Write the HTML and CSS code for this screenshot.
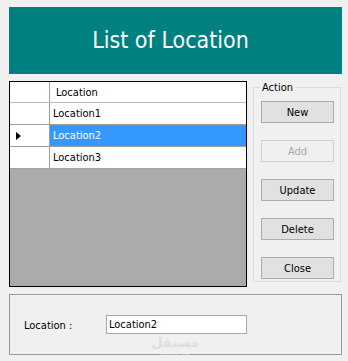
FILE: index.html
```html
<!DOCTYPE html>
<html lang="en">
<head>
  <meta charset="UTF-8">
  <title>List of Location</title>
  <link rel="stylesheet" href="styles.css">
</head>
<body>

  <div class="form">
    <div class="title">List of Location</div>

    <div class="main">
      <div class="grid">
        <table>
          <tr class="head">
            <td class="rowhead"></td>
            <td>Location</td>
          </tr>
          <tr>
            <td class="rowhead"></td>
            <td>Location1</td>
          </tr>
          <tr class="selected">
            <td class="rowhead"><span class="arrow"></span></td>
            <td>Location2</td>
          </tr>
          <tr>
            <td class="rowhead"></td>
            <td>Location3</td>
          </tr>
        </table>
      </div>

      <fieldset class="actions">
        <legend>Action</legend>
        <button>New</button>
        <button disabled>Add</button>
        <button>Update</button>
        <button>Delete</button>
        <button>Close</button>
      </fieldset>
    </div>

    <fieldset class="details">
      <label for="location">Location :</label>
      <input type="text" id="location" value="Location2">
    </fieldset>

    <div class="watermark">
      <span class="ar">مستقل</span>
      <span class="en">mostaql.com</span>
    </div>
  </div>

</body>
</html>
```

FILE: styles.css
```css
body {
  margin: 0;
  background: #f0f0f0;
  font-family: "DejaVu Sans Condensed", "DejaVu Sans", sans-serif;
  font-size: 11px;
  color: #000;
}
.form {
  position: relative;
  width: 333px;
  padding: 7px 6px 0 9px;
}
.title {
  height: 67px;
  line-height: 66px;
  background: #008080;
  color: #fff;
  font-size: 23px;
  text-align: center;
  padding-right: 10px;
}
.main {
  display: flex;
  margin-top: 7px;
  height: 207px;
}
.grid {
  width: 236px;
  height: 204px;
  border: 1px solid #000;
  background: #ababab;
}
table {
  width: 100%;
  border-collapse: collapse;
  table-layout: fixed;
  background: #fff;
}
td {
  height: 21px;
  padding: 0 0 0 3px;
  border: 1px solid #a0a0a0;
  border-top: none;
  border-left: none;
}
td:last-child {
  border-right: none;
}
.head td {
  height: 20px;
  padding-left: 6px;
  border-bottom-color: #bdbdbd;
}
td.rowhead {
  width: 39px;
  padding: 0;
  background: #fff;
}
.selected td {
  background: #3399ff;
  color: #fff;
}
.selected td.rowhead {
  background: #fff;
}
.arrow {
  display: block;
  margin-left: 6px;
  width: 0;
  height: 0;
  border-top: 4px solid transparent;
  border-bottom: 4px solid transparent;
  border-left: 5px solid #000;
}
.actions {
  margin: 0 0 0 6px;
  width: 73px;
  height: 195px;
  padding: 4px 6px 0 7px;
  border: 1px solid #dcdcdc;
  display: flex;
  flex-direction: column;
  gap: 17px;
}
.actions legend {
  padding: 0 2px;
  margin-left: -1px;
}
button {
  width: 73px;
  height: 22px;
  padding: 0;
  font-family: inherit;
  font-size: 11px;
  background: #e1e1e1;
  border: 1px solid #adadad;
  color: #000;
}
button:first-of-type {
  margin-top: 3px;
}
button:disabled {
  background: #f0f0f0;
  border-color: #d0d0d0;
  color: #a8a8a8;
}
.details {
  margin: 6px 0 0 0;
  height: 59px;
  padding: 0 0 0 14px;
  border: 1px solid #999;
  display: flex;
  align-items: center;
}
.details label {
  width: 82px;
  padding-top: 2px;
}
.details input {
  width: 135px;
  height: 15px;
  padding: 1px 2px;
  font-family: inherit;
  font-size: 11px;
  border: 1px solid #a8a8a8;
  background: #fff;
}
.watermark {
  position: absolute;
  left: 150px;
  top: 336px;
  width: 50px;
  text-align: center;
  color: #dedede;
  line-height: 1;
}
.watermark .ar {
  display: block;
  height: 16px;
  font-family: "DejaVu Sans", sans-serif;
  font-size: 13px;
  font-weight: bold;
}
.watermark .en {
  display: block;
  margin-top: 1px;
  font-size: 5px;
}
```
